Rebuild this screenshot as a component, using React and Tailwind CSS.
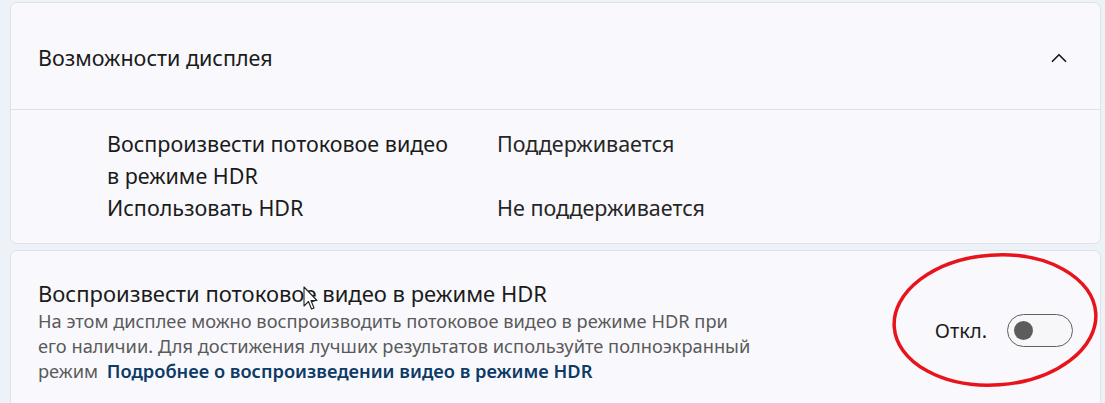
import { ChevronUp } from "lucide-react";

const font = { fontFamily: '"Noto Sans", "Open Sans", sans-serif' };

function Toggle() {
  return (
    <div className="flex h-[33px] w-[66px] items-center rounded-full border border-[#5f5f5f] bg-[#f7f7fa] px-[6px]">
      <div className="h-[19px] w-[19px] rounded-full bg-[#5c5c5c]" />
    </div>
  );
}

export default function App() {
  return (
    <div
      className="relative h-[403px] w-[1105px] overflow-hidden bg-[#edf2f8] pl-[10px] pr-[4px] pt-[2px] text-[#1b1b1b]"
      style={font}
    >
      <section className="rounded-[7px] border border-[#dfe3e8] bg-[#f9f9fd]">
        <div className="flex h-[106px] items-center justify-between pl-[27px] pr-[28px] pt-[3px]">
          <h2 className="text-[21.5px] leading-[28px]">Возможности дисплея</h2>
          <ChevronUp className="h-[26px] w-[26px] text-[#1b1b1b]" strokeWidth={1.6} />
        </div>
        <div className="border-t border-[#dde1e6] pb-[19px] pl-[96px] pt-[18px]">
          <div className="grid grid-cols-[345px_1fr] gap-x-[45px] text-[21.5px] leading-[32px]">
            <div>Воспроизвести потоковое видео в режиме HDR</div>
            <div className="text-[#262626]">Поддерживается</div>
            <div>Использовать HDR</div>
            <div className="text-[#262626]">Не поддерживается</div>
          </div>
        </div>
      </section>

      <section className="mt-[6px] flex items-center justify-between rounded-[7px] border border-[#dfe3e8] bg-[#f9f9fd] pb-[40px] pl-[27px] pr-[27px] pt-[27px]">
        <div>
          <div className="text-[22px] leading-[30px]">
            Воспроизвести потоковое видео в режиме HDR
          </div>
          <p className="text-[18.25px] leading-[25px] text-[#5a5a5a]">
            На этом дисплее можно воспроизводить потоковое видео в режиме HDR при
            <br />
            его наличии. Для достижения лучших результатов используйте полноэкранный
            <br />
            режим{" "}
            <a className="ml-[4px] font-semibold text-[#0d3a66]">
              Подробнее о воспроизведении видео в режиме HDR
            </a>
          </p>
        </div>
        <div className="flex items-center gap-[20px]">
          <span className="text-[20px]">Откл.</span>
          <Toggle />
        </div>
      </section>

      {/* hand-drawn annotation */}
      <svg
        className="pointer-events-none absolute left-[888px] top-[250px]"
        width="215"
        height="140"
        viewBox="0 0 215 140"
      >
        <ellipse
          cx="107"
          cy="70"
          rx="101"
          ry="65"
          transform="rotate(-4 107 70)"
          fill="none"
          stroke="#e8141c"
          strokeWidth="3.5"
        />
      </svg>

      {/* mouse cursor */}
      <svg
        className="pointer-events-none absolute left-[303px] top-[286px]"
        width="16"
        height="26"
        viewBox="0 0 16 26"
      >
        <path
          d="M1 1 L1 20 L5.5 15.5 L8.5 23 L11 22 L8 14.5 L14 14.5 Z"
          fill="#ffffff"
          stroke="#222222"
          strokeWidth="1.1"
          strokeLinejoin="round"
        />
      </svg>
    </div>
  );
}
